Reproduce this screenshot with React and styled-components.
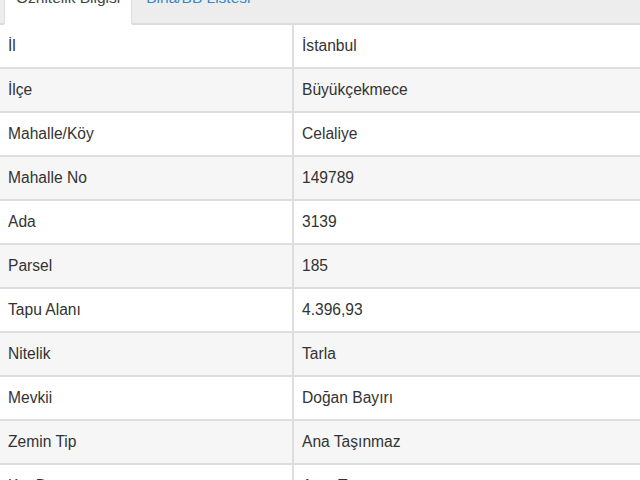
import styled, { createGlobalStyle } from 'styled-components';

const GlobalStyle = createGlobalStyle`
  body {
    margin: 0;
    background: #fff;
    font-family: "Liberation Sans", Arial, sans-serif;
    color: #333;
    overflow: hidden;
  }
`;

const rows = [
  ['İl', 'İstanbul'],
  ['İlçe', 'Büyükçekmece'],
  ['Mahalle/Köy', 'Celaliye'],
  ['Mahalle No', '149789'],
  ['Ada', '3139'],
  ['Parsel', '185'],
  ['Tapu Alanı', '4.396,93'],
  ['Nitelik', 'Tarla'],
  ['Mevkii', 'Doğan Bayırı'],
  ['Zemin Tip', 'Ana Taşınmaz'],
  ['Kat Durumu', 'Arsa Taşınmaz'],
];

export default function App() {
  return (
    <>
      <GlobalStyle />
      <Wrapper>
        <TabBar>
          <Tab $active>Öznitelik Bilgisi</Tab>
          <Tab>Bina/BB Listesi</Tab>
        </TabBar>
        <Table>
          <tbody>
            {rows.map(([label, value], i) => (
              <Row key={label} $striped={i % 2 === 1}>
                <LabelCell>{label}</LabelCell>
                <ValueCell>{value}</ValueCell>
              </Row>
            ))}
          </tbody>
        </Table>
      </Wrapper>
    </>
  );
}

const Wrapper = styled.div`
  margin-top: -28px;
  width: 640px;
`;

const TabBar = styled.ul`
  display: flex;
  margin: 0;
  padding: 0 0 0 4px;
  list-style: none;
  background: #ededed;
  border-bottom: 2px solid #dcdcdc;
`;

const Tab = styled.li`
  font-size: 15.5px;
  line-height: 20px;
  padding: 15px 11px;
  margin-bottom: -2px;
  margin-right: 2px;
  color: ${(p) => (p.$active ? '#444' : '#3a87c8')};
  background: ${(p) => (p.$active ? '#fff' : 'transparent')};
  border: 1px solid ${(p) => (p.$active ? '#dcdcdc' : 'transparent')};
  border-bottom: 2px solid ${(p) => (p.$active ? '#fff' : 'transparent')};
`;

const Table = styled.table`
  width: 100%;
  border-collapse: collapse;
  font-size: 15.6px;
`;

const Row = styled.tr`
  background: ${(p) => (p.$striped ? '#f6f6f6' : '#fff')};
`;

const Cell = styled.td`
  height: 42px;
  padding: 0 8px;
  border-bottom: 2px solid #dedede;
  vertical-align: middle;
`;

const LabelCell = styled(Cell)`
  width: 276px;
  border-right: 2px solid #dedede;
`;

const ValueCell = styled(Cell)``;
